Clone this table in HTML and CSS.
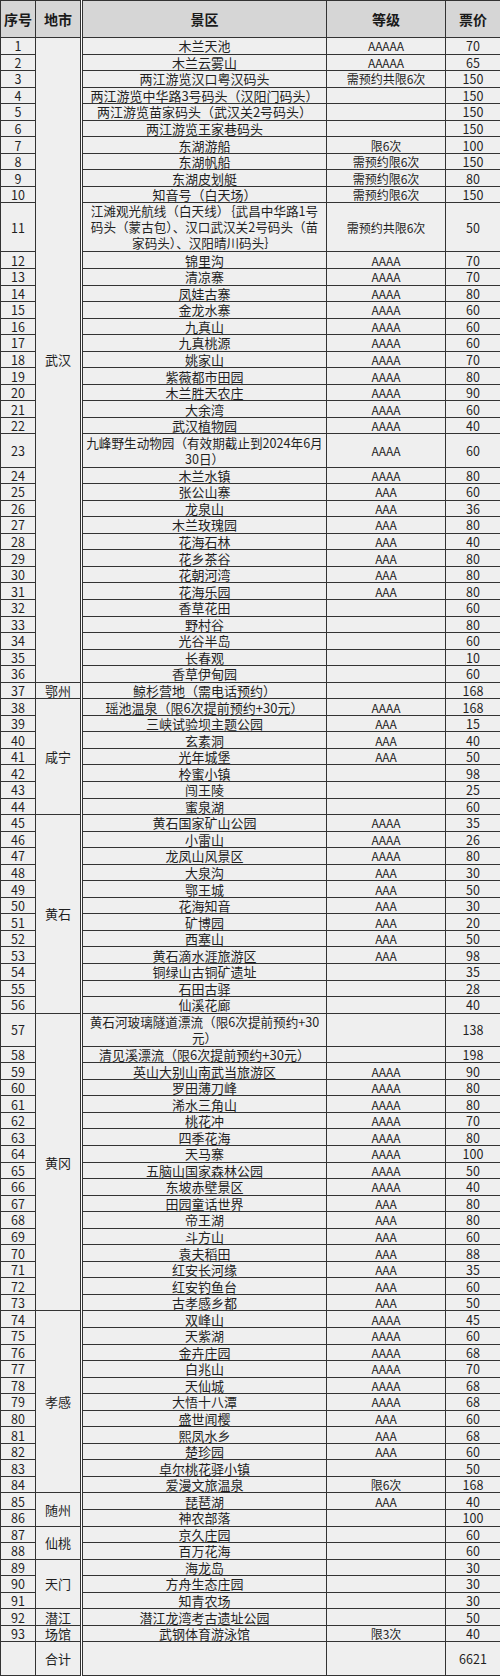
FILE: index.html
```html
<!DOCTYPE html>
<html lang="zh-CN">
<head>
<meta charset="utf-8">
<title>景区票价表</title>
<link rel="stylesheet" href="styles.css">
</head>
<body>
<table class="sheet">
<colgroup>
<col class="c-no"><col class="c-city"><col class="c-name"><col class="c-grade"><col class="c-price">
</colgroup>
<thead>
<tr><th>序号</th><th class="city">地市</th><th>景区</th><th>等级</th><th>票价</th></tr>
</thead>
<tbody>
<tr><td class="n">1</td><td class="city" rowspan="36">武汉</td><td>木兰天池</td><td class="g">AAAAA</td><td class="n">70</td></tr>
<tr><td class="n">2</td><td>木兰云雾山</td><td class="g">AAAAA</td><td class="n">65</td></tr>
<tr><td class="n">3</td><td>两江游览汉口粤汉码头</td><td class="g">需预约共限6次</td><td class="n">150</td></tr>
<tr><td class="n">4</td><td>两江游览中华路3号码头（汉阳门码头）</td><td class="g"></td><td class="n">150</td></tr>
<tr><td class="n">5</td><td>两江游览苗家码头（武汉关2号码头）</td><td class="g"></td><td class="n">150</td></tr>
<tr><td class="n">6</td><td>两江游览王家巷码头</td><td class="g"></td><td class="n">150</td></tr>
<tr><td class="n">7</td><td>东湖游船</td><td class="g">限6次</td><td class="n">100</td></tr>
<tr><td class="n">8</td><td>东湖帆船</td><td class="g">需预约限6次</td><td class="n">150</td></tr>
<tr><td class="n">9</td><td>东湖皮划艇</td><td class="g">需预约限6次</td><td class="n">80</td></tr>
<tr><td class="n">10</td><td>知音号（白天场）</td><td class="g">需预约限6次</td><td class="n">150</td></tr>
<tr class="r3"><td class="n">11</td><td class="multi">江滩观光航线（白天线）｛武昌中华路1号<br>码头（蒙古包）、汉口武汉关2号码头（苗<br>家码头）、汉阳晴川码头｝</td><td class="g">需预约共限6次</td><td class="n">50</td></tr>
<tr><td class="n">12</td><td>锦里沟</td><td class="g">AAAA</td><td class="n">70</td></tr>
<tr><td class="n">13</td><td>清凉寨</td><td class="g">AAAA</td><td class="n">70</td></tr>
<tr><td class="n">14</td><td>凤娃古寨</td><td class="g">AAAA</td><td class="n">80</td></tr>
<tr><td class="n">15</td><td>金龙水寨</td><td class="g">AAAA</td><td class="n">60</td></tr>
<tr><td class="n">16</td><td>九真山</td><td class="g">AAAA</td><td class="n">60</td></tr>
<tr><td class="n">17</td><td>九真桃源</td><td class="g">AAAA</td><td class="n">60</td></tr>
<tr><td class="n">18</td><td>姚家山</td><td class="g">AAAA</td><td class="n">70</td></tr>
<tr><td class="n">19</td><td>紫薇都市田园</td><td class="g">AAAA</td><td class="n">80</td></tr>
<tr><td class="n">20</td><td>木兰胜天农庄</td><td class="g">AAAA</td><td class="n">90</td></tr>
<tr><td class="n">21</td><td>大余湾</td><td class="g">AAAA</td><td class="n">60</td></tr>
<tr><td class="n">22</td><td>武汉植物园</td><td class="g">AAAA</td><td class="n">40</td></tr>
<tr class="r2"><td class="n">23</td><td class="multi">九峰野生动物园（有效期截止到2024年6月<br>30日）</td><td class="g">AAAA</td><td class="n">60</td></tr>
<tr><td class="n">24</td><td>木兰水镇</td><td class="g">AAAA</td><td class="n">80</td></tr>
<tr><td class="n">25</td><td>张公山寨</td><td class="g">AAA</td><td class="n">60</td></tr>
<tr><td class="n">26</td><td>龙泉山</td><td class="g">AAA</td><td class="n">36</td></tr>
<tr><td class="n">27</td><td>木兰玫瑰园</td><td class="g">AAA</td><td class="n">80</td></tr>
<tr><td class="n">28</td><td>花海石林</td><td class="g">AAA</td><td class="n">40</td></tr>
<tr><td class="n">29</td><td>花乡茶谷</td><td class="g">AAA</td><td class="n">80</td></tr>
<tr><td class="n">30</td><td>花朝河湾</td><td class="g">AAA</td><td class="n">80</td></tr>
<tr><td class="n">31</td><td>花海乐园</td><td class="g">AAA</td><td class="n">80</td></tr>
<tr><td class="n">32</td><td>香草花田</td><td class="g"></td><td class="n">60</td></tr>
<tr><td class="n">33</td><td>野村谷</td><td class="g"></td><td class="n">80</td></tr>
<tr><td class="n">34</td><td>光谷半岛</td><td class="g"></td><td class="n">60</td></tr>
<tr><td class="n">35</td><td>长春观</td><td class="g"></td><td class="n">10</td></tr>
<tr><td class="n">36</td><td>香草伊甸园</td><td class="g"></td><td class="n">60</td></tr>
<tr><td class="n">37</td><td class="city">鄂州</td><td>鲸杉营地（需电话预约）</td><td class="g"></td><td class="n">168</td></tr>
<tr><td class="n">38</td><td class="city" rowspan="7">咸宁</td><td>瑶池温泉（限6次提前预约+30元）</td><td class="g">AAAA</td><td class="n">168</td></tr>
<tr><td class="n">39</td><td>三峡试验坝主题公园</td><td class="g">AAA</td><td class="n">15</td></tr>
<tr><td class="n">40</td><td>玄素洞</td><td class="g">AAA</td><td class="n">40</td></tr>
<tr><td class="n">41</td><td>光年城堡</td><td class="g">AAA</td><td class="n">50</td></tr>
<tr><td class="n">42</td><td>柃蜜小镇</td><td class="g"></td><td class="n">98</td></tr>
<tr><td class="n">43</td><td>闯王陵</td><td class="g"></td><td class="n">25</td></tr>
<tr><td class="n">44</td><td>蜜泉湖</td><td class="g"></td><td class="n">60</td></tr>
<tr><td class="n">45</td><td class="city" rowspan="12">黄石</td><td>黄石国家矿山公园</td><td class="g">AAAA</td><td class="n">35</td></tr>
<tr><td class="n">46</td><td>小雷山</td><td class="g">AAAA</td><td class="n">26</td></tr>
<tr><td class="n">47</td><td>龙凤山风景区</td><td class="g">AAAA</td><td class="n">80</td></tr>
<tr><td class="n">48</td><td>大泉沟</td><td class="g">AAA</td><td class="n">30</td></tr>
<tr><td class="n">49</td><td>鄂王城</td><td class="g">AAA</td><td class="n">50</td></tr>
<tr><td class="n">50</td><td>花海知音</td><td class="g">AAA</td><td class="n">30</td></tr>
<tr><td class="n">51</td><td>矿博园</td><td class="g">AAA</td><td class="n">20</td></tr>
<tr><td class="n">52</td><td>西塞山</td><td class="g">AAA</td><td class="n">50</td></tr>
<tr><td class="n">53</td><td>黄石滴水涯旅游区</td><td class="g">AAA</td><td class="n">98</td></tr>
<tr><td class="n">54</td><td>铜绿山古铜矿遗址</td><td class="g"></td><td class="n">35</td></tr>
<tr><td class="n">55</td><td>石田古驿</td><td class="g"></td><td class="n">28</td></tr>
<tr><td class="n">56</td><td>仙溪花廊</td><td class="g"></td><td class="n">40</td></tr>
<tr class="r2"><td class="n">57</td><td class="city" rowspan="17">黄冈</td><td class="multi">黄石河玻璃隧道漂流（限6次提前预约+30<br>元）</td><td class="g"></td><td class="n">138</td></tr>
<tr><td class="n">58</td><td>清见溪漂流（限6次提前预约+30元）</td><td class="g"></td><td class="n">198</td></tr>
<tr><td class="n">59</td><td>英山大别山南武当旅游区</td><td class="g">AAAA</td><td class="n">90</td></tr>
<tr><td class="n">60</td><td>罗田薄刀峰</td><td class="g">AAAA</td><td class="n">80</td></tr>
<tr><td class="n">61</td><td>浠水三角山</td><td class="g">AAAA</td><td class="n">80</td></tr>
<tr><td class="n">62</td><td>桃花冲</td><td class="g">AAAA</td><td class="n">70</td></tr>
<tr><td class="n">63</td><td>四季花海</td><td class="g">AAAA</td><td class="n">80</td></tr>
<tr><td class="n">64</td><td>天马寨</td><td class="g">AAAA</td><td class="n">100</td></tr>
<tr><td class="n">65</td><td>五脑山国家森林公园</td><td class="g">AAAA</td><td class="n">50</td></tr>
<tr><td class="n">66</td><td>东坡赤壁景区</td><td class="g">AAAA</td><td class="n">40</td></tr>
<tr><td class="n">67</td><td>田园童话世界</td><td class="g">AAA</td><td class="n">80</td></tr>
<tr><td class="n">68</td><td>帝王湖</td><td class="g">AAA</td><td class="n">80</td></tr>
<tr><td class="n">69</td><td>斗方山</td><td class="g">AAA</td><td class="n">60</td></tr>
<tr><td class="n">70</td><td>袁夫稻田</td><td class="g">AAA</td><td class="n">88</td></tr>
<tr><td class="n">71</td><td>红安长河缘</td><td class="g">AAA</td><td class="n">35</td></tr>
<tr><td class="n">72</td><td>红安钓鱼台</td><td class="g">AAA</td><td class="n">60</td></tr>
<tr><td class="n">73</td><td>古孝感乡都</td><td class="g">AAA</td><td class="n">50</td></tr>
<tr><td class="n">74</td><td class="city" rowspan="11">孝感</td><td>双峰山</td><td class="g">AAAA</td><td class="n">45</td></tr>
<tr><td class="n">75</td><td>天紫湖</td><td class="g">AAAA</td><td class="n">60</td></tr>
<tr><td class="n">76</td><td>金卉庄园</td><td class="g">AAAA</td><td class="n">68</td></tr>
<tr><td class="n">77</td><td>白兆山</td><td class="g">AAAA</td><td class="n">70</td></tr>
<tr><td class="n">78</td><td>天仙城</td><td class="g">AAAA</td><td class="n">68</td></tr>
<tr><td class="n">79</td><td>大悟十八潭</td><td class="g">AAAA</td><td class="n">68</td></tr>
<tr><td class="n">80</td><td>盛世闻樱</td><td class="g">AAA</td><td class="n">60</td></tr>
<tr><td class="n">81</td><td>熙凤水乡</td><td class="g">AAA</td><td class="n">68</td></tr>
<tr><td class="n">82</td><td>楚珍园</td><td class="g">AAA</td><td class="n">60</td></tr>
<tr><td class="n">83</td><td>卓尔桃花驿小镇</td><td class="g"></td><td class="n">50</td></tr>
<tr><td class="n">84</td><td>爱漫文旅温泉</td><td class="g">限6次</td><td class="n">168</td></tr>
<tr><td class="n">85</td><td class="city" rowspan="2">随州</td><td>琵琶湖</td><td class="g">AAA</td><td class="n">40</td></tr>
<tr><td class="n">86</td><td>神农部落</td><td class="g"></td><td class="n">100</td></tr>
<tr><td class="n">87</td><td class="city" rowspan="2">仙桃</td><td>京久庄园</td><td class="g"></td><td class="n">60</td></tr>
<tr><td class="n">88</td><td>百万花海</td><td class="g"></td><td class="n">60</td></tr>
<tr><td class="n">89</td><td class="city" rowspan="3">天门</td><td>海龙岛</td><td class="g"></td><td class="n">30</td></tr>
<tr><td class="n">90</td><td>方舟生态庄园</td><td class="g"></td><td class="n">30</td></tr>
<tr><td class="n">91</td><td>知青农场</td><td class="g"></td><td class="n">30</td></tr>
<tr><td class="n">92</td><td class="city">潜江</td><td>潜江龙湾考古遗址公园</td><td class="g"></td><td class="n">50</td></tr>
<tr><td class="n">93</td><td class="city">场馆</td><td>武钢体育游泳馆</td><td class="g">限3次</td><td class="n">40</td></tr>
<tr class="total"><td class="n"></td><td class="city">合计</td><td></td><td class="g"></td><td class="n">6621</td></tr>
</tbody>
</table>
</body>
</html>
```

FILE: styles.css
```css
html, body {
  margin: 0;
  padding: 0;
  background: #ffffff;
}

body {
  font-family: "Noto Sans CJK SC", "Noto Sans", sans-serif;
  color: #1f1f1f;
}

.sheet {
  width: 500px;
  border-collapse: collapse;
  table-layout: fixed;
}

.c-no { width: 35px; }
.c-city { width: 46px; }
.c-name { width: 245px; }
.c-grade { width: 119px; }
.c-price { width: 55px; }

.sheet th,
.sheet td {
  border: 1px solid #333333;
  padding: 0;
  text-align: center;
  vertical-align: middle;
  background: #efefef;
  font-size: 13px;
  line-height: 15px;
  font-weight: normal;
  white-space: nowrap;
  overflow: hidden;
}

.sheet th {
  background: #d6d6d6;
  font-weight: bold;
  font-size: 14px;
  color: #1a1a1a;
}

.sheet thead tr {
  height: 37px;
}

.sheet tbody tr {
  height: 16.55px;
}

.sheet tbody tr.r2 {
  height: 33.1px;
}

.sheet tbody tr.r3 {
  height: 48.5px;
}

.sheet tbody tr.total {
  height: 34px;
}

.sheet .city {
  border-right: 3px double #333333;
}

.sheet td.n {
  font-size: 12.5px;
}

.sheet td.g {
  font-size: 12px;
}

.sheet td.multi {
  line-height: 16px;
  font-size: 12.6px;
}
```
